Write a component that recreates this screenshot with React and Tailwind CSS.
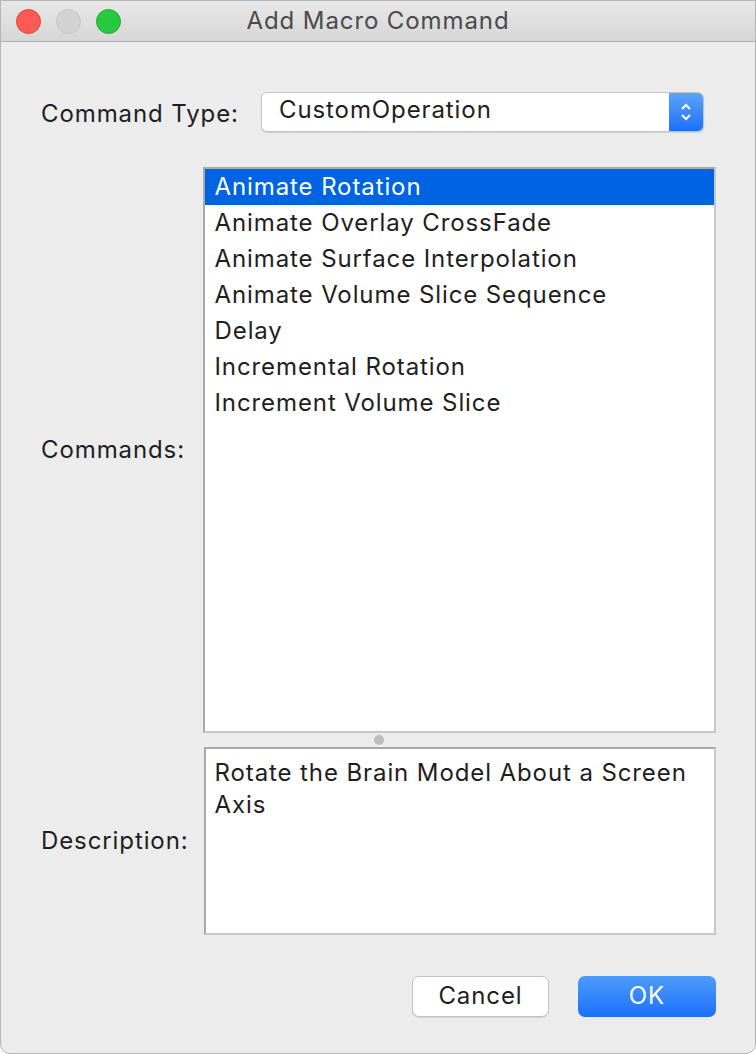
import React from "react";

const commands = [
  "Animate Rotation",
  "Animate Overlay CrossFade",
  "Animate Surface Interpolation",
  "Animate Volume Slice Sequence",
  "Delay",
  "Incremental Rotation",
  "Increment Volume Slice",
];

const font = { fontFamily: "Inter, Roboto, 'Noto Sans', sans-serif" };

export default function App() {
  return (
    <div
      className="w-[756px] h-[1054px] bg-[#ececec] border border-[#b5b5b5] rounded-b-[10px] overflow-hidden flex flex-col text-[#1e1e1e] tracking-[0.9px]"
      style={font}
    >
      {/* title bar */}
      <div className="h-[41px] shrink-0 bg-gradient-to-b from-[#e8e8e8] to-[#d6d6d6] border-b border-[#b0b0b0] flex items-center relative">
        <div className="flex items-center gap-[15px] pl-[15px]">
          <span className="w-[25px] h-[25px] rounded-full bg-[#fd5b56] border border-[#e0443e]" />
          <span className="w-[25px] h-[25px] rounded-full bg-[#d3d3d3] border border-[#c4c4c4]" />
          <span className="w-[25px] h-[25px] rounded-full bg-[#27c93f] border border-[#1eaa2f]" />
        </div>
        <div className="absolute inset-0 flex items-center justify-center text-[24px] text-[#4a4a4a] pointer-events-none">
          Add Macro Command
        </div>
      </div>

      <div className="flex-1 flex flex-col pl-[40px] pr-[39px]">
        {/* command type */}
        <div className="flex items-center mt-[50px] h-[40px]">
          <div className="w-[220px] text-[24px] pt-[4px]">Command Type:</div>
          <div className="flex-1 h-[40px] flex bg-white border border-[#c4c4c4] rounded-[6px] overflow-hidden mr-[12px] shadow-[0_1px_1px_rgba(0,0,0,0.12)]">
            <div className="flex-1 pl-[17px] text-[24px] flex items-center pb-[4px]">CustomOperation</div>
            <div className="w-[34px] bg-gradient-to-b from-[#5ea2fb] to-[#1a6ffb] flex items-center justify-center">
              <svg width="14" height="22" viewBox="0 0 14 22" fill="none" stroke="white" strokeWidth="2">
                <path d="M3 8l4-4 4 4" />
                <path d="M3 14l4 4 4-4" />
              </svg>
            </div>
          </div>
        </div>

        {/* commands */}
        <div className="flex mt-[35px]">
          <div className="w-[162px] text-[24px] flex items-center">Commands:</div>
          <div className="w-[515px] h-[566px] bg-white border-2 border-[#a9a9a9] border-r-[#c8c8c8] border-b-[#c8c8c8]">
            {commands.map((c, i) => (
              <div
                key={c}
                className={`h-[36px] pl-[10px] text-[24px] flex items-center ${
                  i === 0 ? "bg-[#0063e1] text-white" : "text-[#1e1e1e]"
                }`}
              >
                {c}
              </div>
            ))}
          </div>
        </div>

        {/* splitter */}
        <div className="h-[14px] flex items-center pl-[333px]">
          <span className="w-[10px] h-[10px] rounded-full bg-[#bcbcbc]" />
        </div>

        {/* description */}
        <div className="flex">
          <div className="w-[163px] text-[24px] flex items-center">Description:</div>
          <div className="w-[514px] h-[188px] bg-white border-2 border-[#a9a9a9] border-r-[#c8c8c8] border-b-[#c8c8c8] pl-[9px] pt-[8px] text-[24px] leading-[32px] pr-[8px]">
            Rotate the Brain Model About a Screen Axis
          </div>
        </div>

        {/* buttons */}
        <div className="flex justify-end gap-[29px] mt-[41px]">
          <button className="w-[137px] h-[41px] bg-white border border-[#c2c2c2] rounded-[7px] text-[24px] text-[#1e1e1e] pb-[2px] shadow-[0_1px_1px_rgba(0,0,0,0.1)]">
            Cancel
          </button>
          <button className="w-[138px] h-[41px] bg-gradient-to-b from-[#4e9bfb] to-[#1a6ffb] rounded-[7px] text-[24px] text-white pb-[2px]">
            OK
          </button>
        </div>
      </div>
    </div>
  );
}
